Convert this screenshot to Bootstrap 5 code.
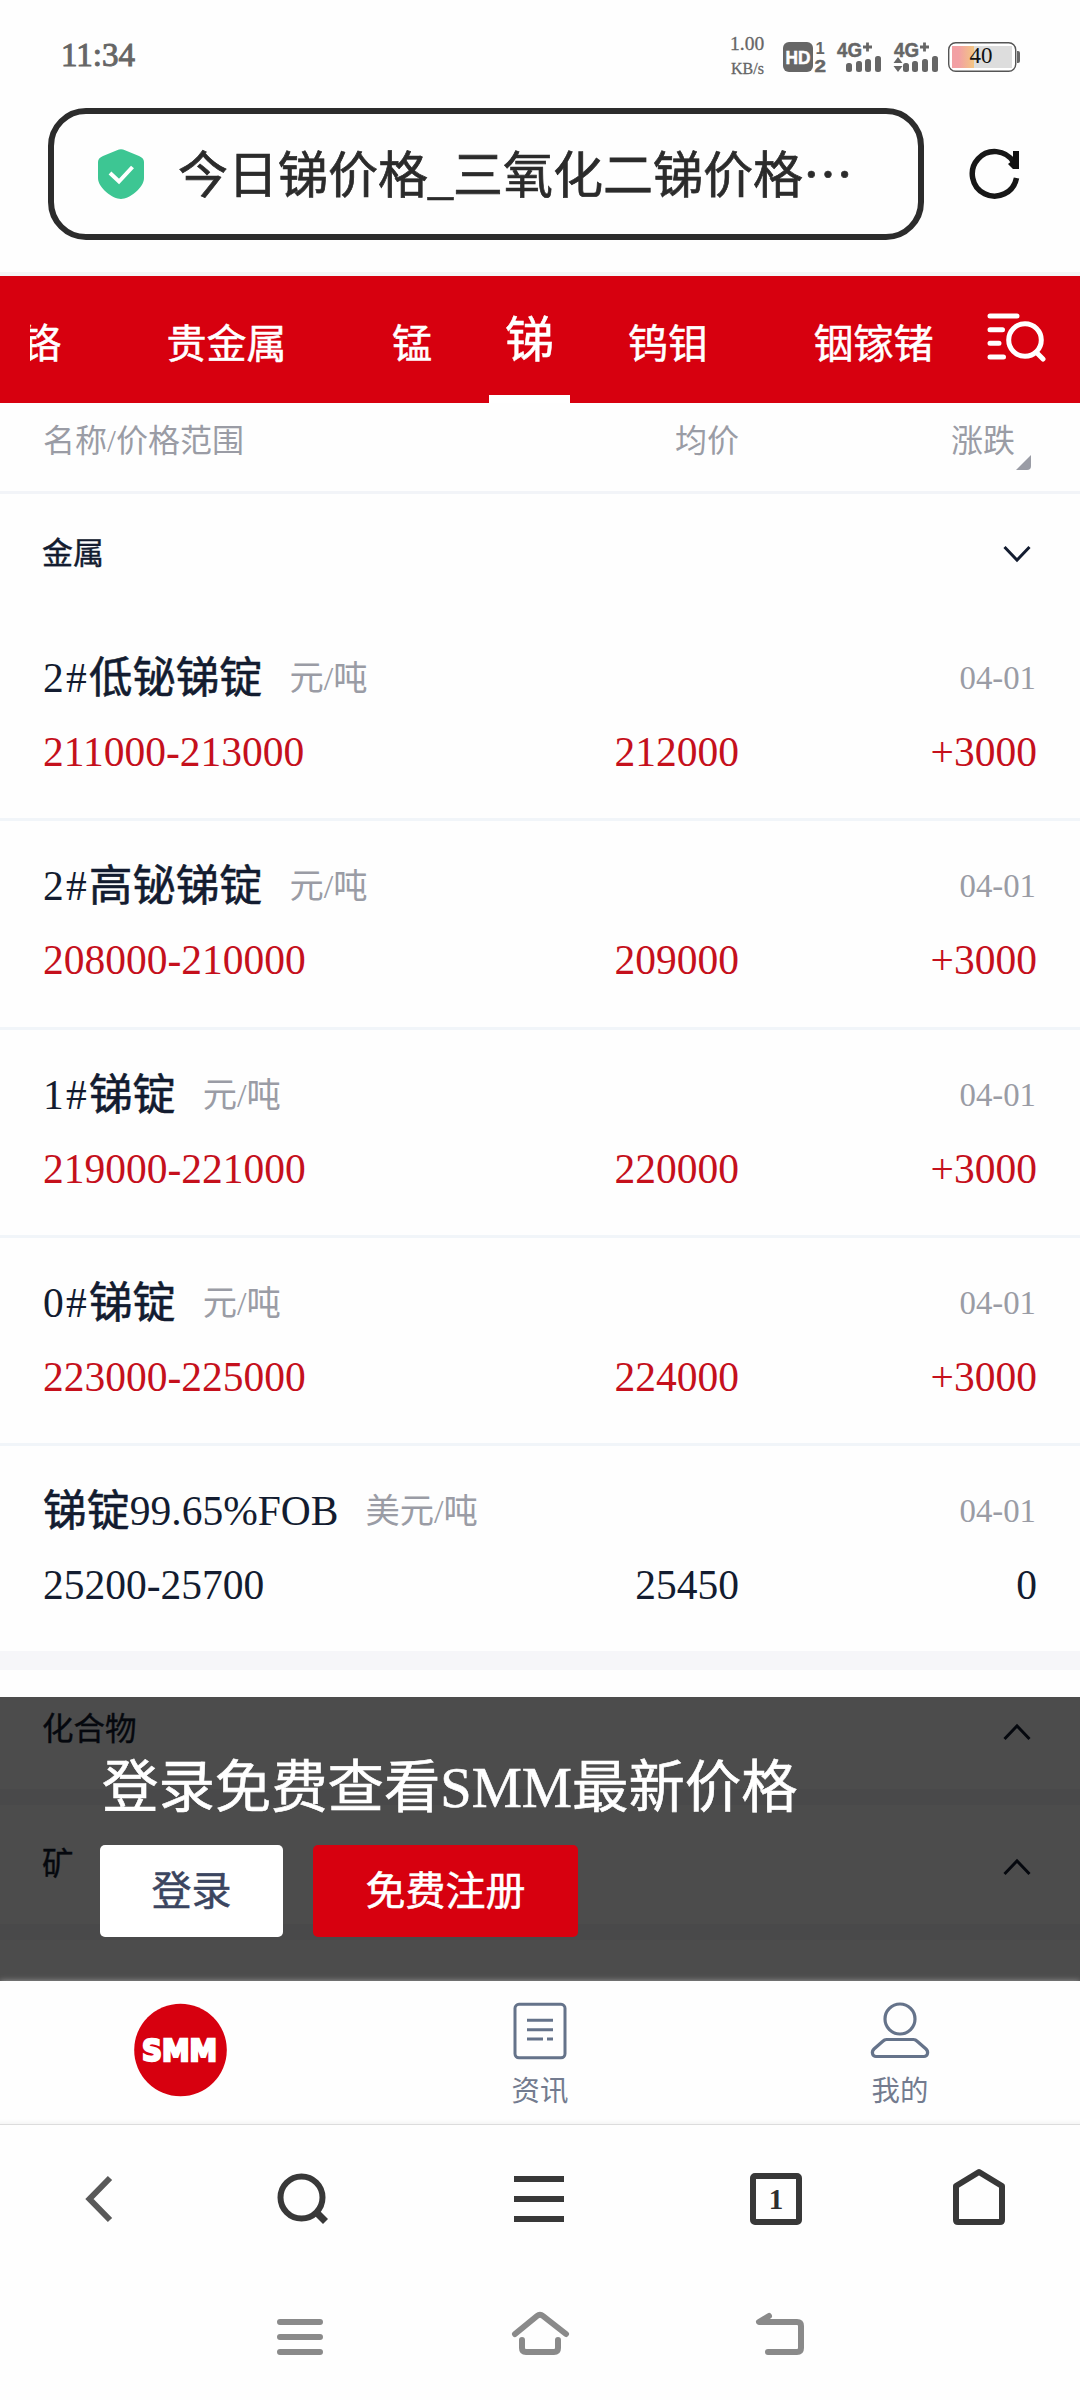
<!DOCTYPE html>
<html lang="zh-CN">
<head>
<meta charset="utf-8">
<meta name="viewport" content="width=device-width, initial-scale=1">
<title>今日锑价格_三氧化二锑价格</title>
<link href="https://cdn.jsdelivr.net/npm/bootstrap@5.3.0/dist/css/bootstrap.min.css" rel="stylesheet">
<style>
  body { width: 1080px; height: 2400px; overflow: hidden; background: #fefefe; color: #131c30; font-family: "Liberation Serif", "Noto Sans CJK SC", serif; line-height: 1; }
  svg { display: block; flex: none; }
  .status-bar { height: 108px; padding: 0 60px 0 61px; color: #666; }
  .clock { font-size: 33px; line-height: 36px; margin-top: 37px; -webkit-text-stroke: 1px #666; }
  .status-icons { margin-top: 32px; }
  .url-row { height: 164px; padding-left: 48px; }
  .url-box { width: 876px; height: 132px; border: 6px solid #2c2c2c; border-radius: 38px; padding-left: 44px; font-size: 50px; line-height: 60px; color: #2b2b2b; -webkit-text-stroke: .7px #2b2b2b; }
  .url-box .url-text { margin: -1px 0 0 34px; }
  .dots { font-family: "Noto Sans CJK SC", sans-serif; }
  .url-row .reload { margin: 39px 0 0 44px; }
  .tab-strip { height: 131px; background: #d7000f; border-top: 4px solid #f5f5f6; color: #fff; font-size: 40px; padding-left: 30px; -webkit-text-stroke: .5px #fff; }
  .tab-scroll { width: 930px; height: 127px; line-height: 127px; padding-top: 5px; }
  .tab-scroll .lead-tab { margin-left: -9px; }
  .tab-scroll > span + span { margin-left: 105.5px; }
  .tab-scroll .tab-on { width: 81px; height: 122px; line-height: 120px; margin-left: 57px !important; font-size: 49px; border-bottom: 8px solid #fff; }
  .tab-scroll .tab-on + span { margin-left: 58px; }
  .tab-strip svg { margin: 33px 0 0 26px; }
  .list-cols { width: 100%; padding-left: 43px; display: grid; grid-template-columns: 396px 300px 298px; }
  .list-head { height: 91px; border-bottom: 3px solid #f2f4f8; font-size: 32px; line-height: 77px; color: #9a9ca5; }
  .list-head .chg { padding-right: 22px; }
  .tri { right: 49px; top: 52px; }
  .group-head { height: 119px; padding: 0 48px 0 42px; font-size: 31px; -webkit-text-stroke: .4px #131c30; }
  .group-head.lower { font-size: 31.5px; }
  .group-head.lower svg { margin-top: 2px; }
  .price-item { height: 208.25px; border-bottom: 3px solid #f1f5f9; padding-top: 39px; }
  .price-item.last { height: 205px; border: 0; }
  .item-name { height: 52px; padding: 0 44px 0 43px; font-size: 41.5px; line-height: 52px; }
  .item-name .zh { font-size: 43.4px; -webkit-text-stroke: .6px #131c30; }
  .item-name .grade { letter-spacing: 2.2px; }
  .item-name .unit { font-size: 34.3px; color: #9a9ca5; margin-left: 27px; }
  .item-name .day { font-size: 32.8px; color: #9a9ca5; }
  .item-price { font-size: 41.5px; line-height: 52px; margin-top: 22px; }
  .up .item-price { color: #c5101c; }
  .band { background: #f6f6f9; height: 19px; }
  .band.thin { height: 16px; }
  .list-zone { height: 1578px; }
  .login-mask { left: 0; right: 0; top: 1294px; height: 284px; background: rgba(0,0,0,.7); color: #fff; padding: 61px 0 0 100px; }
  .login-mask p { font-size: 56.4px; line-height: 60px; margin: 0 0 27px 2px; -webkit-text-stroke: .6px #fff; }
  .login-mask .btn { height: 92px; border: 0; border-radius: 5px; padding: 0; font-size: 40px; line-height: 94px; -webkit-text-stroke: .5px; }
  .b-in { width: 183px; background: #fff; color: #3b4560; }
  .b-reg { width: 265px; background: #d7000f; color: #fff; }
  .btn-gap { gap: 30px; }
  .site-tabs { height: 144px; border-bottom: 1px solid #dcdcdc; box-shadow: 0 0 6px rgba(255,255,255,.45), inset 0 -5px 5px -4px rgba(0,0,0,.06); background: #fefefe; position: relative; font-size: 28.4px; color: #737b8f; }
  .site-tabs > div { width: 360px; padding-top: 19px; }
  .site-tabs span { line-height: 34px; margin-top: 15px; }
</style>
<script src="https://cdn.jsdelivr.net/npm/bootstrap@5.3.0/dist/js/bootstrap.bundle.min.js"></script>
</head>
<body>
<header class="status-bar d-flex justify-content-between align-items-start">
  <div class="clock">11:34</div>
  <svg class="status-icons" width="292" height="46" viewBox="728 32 292 46" fill="#666">
    <g font-family="Liberation Serif" stroke="#666" stroke-width=".3"><text x="730" y="50" font-size="19.500">1.00</text><text x="731" y="74" font-size="16">KB/s</text></g>
    <rect x="783" y="42" width="30" height="30" rx="6"/>
    <g font-family="Liberation Sans" font-weight="700">
      <text x="785.500" y="64" font-size="19" fill="#fff" textLength="25" lengthAdjust="spacingAndGlyphs" stroke="#fff" stroke-width=".5">HD</text>
      <text x="815.500" y="54" font-size="16.500">1</text><text x="814.500" y="72" font-size="17" textLength="11.500" lengthAdjust="spacingAndGlyphs" stroke="#666" stroke-width=".5">2</text>
      <g stroke="#666" stroke-width=".5"><text x="837" y="57" font-size="20" textLength="25" lengthAdjust="spacingAndGlyphs">4G</text><text x="894" y="57" font-size="20" textLength="25" lengthAdjust="spacingAndGlyphs">4G</text></g>
    </g>
    <path d="M863 47h9M867.500 42.500v9M920 47h9M924.500 42.500v9" stroke="#666" stroke-width="2.800"/>
    <g>
      <rect x="846" y="63" width="6" height="9" rx="2.500"/><rect x="856" y="61" width="6" height="11" rx="2.500"/><rect x="865" y="59" width="6" height="13" rx="2.500"/><rect x="875" y="56" width="6" height="16" rx="2.500"/>
      <rect x="903" y="63" width="6" height="9" rx="2.500"/><rect x="912" y="61" width="6" height="11" rx="2.500"/><rect x="922" y="59" width="6" height="13" rx="2.500"/><rect x="932" y="56" width="6" height="16" rx="2.500"/>
      <path d="M898 57l4.500 6h-9zM898 72l4.500-6h-9z"/>
    </g>
    <defs><linearGradient id="bat"><stop offset=".3" stop-color="#f2a0a4"/><stop offset="1" stop-color="#f3c683"/></linearGradient></defs>
    <rect x="948.700" y="42.700" width="67" height="28.600" rx="7" fill="#fff" stroke="#555" stroke-width="1.400"/>
    <path d="M952 46h22v22h-22z" fill="url(#bat)"/><path d="M974 46h38v22h-38z" fill="#ddd"/>
    <path d="M1017 51h1q2 0 2 2v8q0 2-2 2h-1z"/>
    <text x="969.500" y="63" font-size="23" fill="#111" font-family="Liberation Serif">40</text>
  </svg>
</header>

<div class="url-row d-flex align-items-start">
  <div class="url-box d-flex align-items-center">
    <svg width="46" height="50" viewBox="0 0 46 50"><path d="M19 1.200Q23-.8 27 1.200L41 7q5 2 5 6v16c0 10-15 21-23 21S0 39 0 29V13Q0 9 5 7z" fill="#3dc693"/><path d="M12 24l9 8.500L34.500 18" fill="none" stroke="#fff" stroke-width="4"/></svg>
    <span class="url-text text-nowrap">今日锑价格_三氧化二锑价格<span class="dots">…</span></span>
  </div>
  <svg class="reload" width="54" height="54" viewBox="968 147 54 54" fill="none" stroke="#171717"><path d="M1016.500 178A22.300 22.300 0 1 1 1013.500 162" stroke-width="5.500"/><path d="M1013 151h6v18h-6l-5-5 5-4z" fill="#111" stroke="none"/></svg>
</div>

<nav class="tab-strip d-flex align-items-start">
  <div class="tab-scroll d-flex overflow-hidden text-nowrap">
    <span class="lead-tab">铬</span><span>贵金属</span><span>锰</span><span class="tab-on text-center">锑</span><span>钨钼</span><span>铟镓锗</span>
  </div>
  <svg width="64" height="54" viewBox="987 309 64 54" fill="none" stroke="#fff" stroke-width="5" stroke-linecap="round"><path d="M991 316h27M991 329.700h12.500M991 343.300h9M991 357h13.500M1038 353l6 6"/><circle cx="1026" cy="340" r="16.300"/></svg>
</nav>

<main class="list-zone position-relative overflow-hidden">
  <div class="list-head list-cols position-relative">
    <span>名称/价格范围</span><span class="text-end">均价</span><span class="text-end chg">涨跌</span>
    <svg class="tri position-absolute" width="15" height="15"><path d="M15 0v11q0 4-4 4H0z" fill="#9a9ca5"/></svg>
  </div>
  <div class="group-head d-flex justify-content-between align-items-center"><span>金属</span>
    <svg width="30" height="20" viewBox="0 0 30 20" fill="none" stroke="#131c30" stroke-width="3"><path d="M2.500 3L15 16 27.500 3"/></svg></div>

  <section class="price-item up">
    <div class="item-name d-flex"><span class="grade">2#</span><span class="zh">低铋锑锭</span><span class="unit">元/吨</span><span class="day ms-auto">04-01</span></div>
    <div class="item-price list-cols"><span>211000-213000</span><span class="text-end">212000</span><span class="text-end">+3000</span></div>
  </section>
  <section class="price-item up">
    <div class="item-name d-flex"><span class="grade">2#</span><span class="zh">高铋锑锭</span><span class="unit">元/吨</span><span class="day ms-auto">04-01</span></div>
    <div class="item-price list-cols"><span>208000-210000</span><span class="text-end">209000</span><span class="text-end">+3000</span></div>
  </section>
  <section class="price-item up">
    <div class="item-name d-flex"><span class="grade">1#</span><span class="zh">锑锭</span><span class="unit">元/吨</span><span class="day ms-auto">04-01</span></div>
    <div class="item-price list-cols"><span>219000-221000</span><span class="text-end">220000</span><span class="text-end">+3000</span></div>
  </section>
  <section class="price-item up">
    <div class="item-name d-flex"><span class="grade">0#</span><span class="zh">锑锭</span><span class="unit">元/吨</span><span class="day ms-auto">04-01</span></div>
    <div class="item-price list-cols"><span>223000-225000</span><span class="text-end">224000</span><span class="text-end">+3000</span></div>
  </section>
  <section class="price-item last">
    <div class="item-name d-flex"><span class="zh">锑锭</span><span>99.65%FOB</span><span class="unit">美元/吨</span><span class="day ms-auto">04-01</span></div>
    <div class="item-price list-cols"><span>25200-25700</span><span class="text-end">25450</span><span class="text-end">0</span></div>
  </section>
  <div class="band"></div>
  <div class="group-head lower d-flex justify-content-between align-items-center"><span>化合物</span>
    <svg width="30" height="20" viewBox="0 -2 30 20" fill="none" stroke="#131c30" stroke-width="3"><path d="M2.500 16L15 3 27.500 16"/></svg></div>
  <div class="band thin"></div>
  <div class="group-head lower d-flex justify-content-between align-items-center"><span>矿</span>
    <svg width="30" height="20" viewBox="0 -2 30 20" fill="none" stroke="#131c30" stroke-width="3"><path d="M2.500 16L15 3 27.500 16"/></svg></div>
  <div class="band thin"></div>

  <div class="login-mask position-absolute">
    <p>登录免费查看SMM最新价格</p>
    <div class="d-flex btn-gap"><a class="btn b-in">登录</a><a class="btn b-reg">免费注册</a></div>
  </div>
</main>

<nav class="site-tabs d-flex">
  <div class="d-flex flex-column align-items-center">
    <svg width="94" height="94" viewBox="0 0 94 94" style="margin-top:3px"><circle cx="47.500" cy="47" r="46.300" fill="#d7000f"/><text x="9" y="58" font-family="DejaVu Sans" font-weight="700" font-size="29.500" fill="#fff" stroke="#fff" stroke-width="2.400" textLength="75" lengthAdjust="spacingAndGlyphs">SMM</text></svg>
  </div>
  <div class="d-flex flex-column align-items-center">
    <svg width="58" height="60" viewBox="511 2000 58 60" fill="none" stroke="#65738a" stroke-width="3"><rect x="515" y="2004.300" width="50" height="53.500" rx="4"/><path d="M527 2020.300h26M527 2029.700h26M527 2039h16M547 2039h6"/></svg>
    <span>资讯</span>
  </div>
  <div class="d-flex flex-column align-items-center">
    <svg width="62" height="60" viewBox="869 2000 62 60" fill="none" stroke="#65738a" stroke-width="3.200"><circle cx="900" cy="2019" r="15"/><path d="M886.500 2039.500h27q2 0 4 2l8.500 7.500c3 3 1.500 7.500-2 7.500h-48c-3.500 0-5-4.500-2-7.500l8.500-7.500q2-2 4-2z"/></svg>
    <span>我的</span>
  </div>
</nav>

<footer>
  <!-- browser toolbar -->
  <svg width="1080" height="145" viewBox="0 2125 1080 145" fill="none" stroke="#383838" stroke-width="6">
    <path d="M110 2178L89.500 2199l20.500 21" stroke="#595959"/>
    <circle cx="301.500" cy="2197.500" r="21"/><path d="M316 2212l9.500 9.500" stroke-width="7"/>
    <path d="M514 2179h50M514 2199h50M514 2219h50"/>
    <rect x="753" y="2176" width="46" height="46" rx="2"/>
    <text x="776" y="2209" font-size="29" font-family="Liberation Serif" font-weight="700" text-anchor="middle" fill="#2e2e2e" stroke="none">1</text>
    <path d="M956 2220v-34L979 2172l23 14v34q0 2-2 2h-42q-2 0-2-2z" stroke-linejoin="round"/>
  </svg>
  <!-- system navigation -->
  <svg width="1080" height="130" viewBox="0 2270 1080 130" fill="none" stroke="#8a8a8a" stroke-width="6" stroke-linecap="round" stroke-linejoin="round">
    <path d="M280 2322h40M280 2337h40M280 2352h40"/>
    <path d="M515 2334l22-18q3-2.500 6 0l23 18M522 2340v8q0 4 4 4h28q4 0 4-4v-8"/>
    <path d="M769 2316l-10 6h38q4 0 4 4v22q0 4-4 4h-29"/>
  </svg>
</footer>
</body>
</html>
